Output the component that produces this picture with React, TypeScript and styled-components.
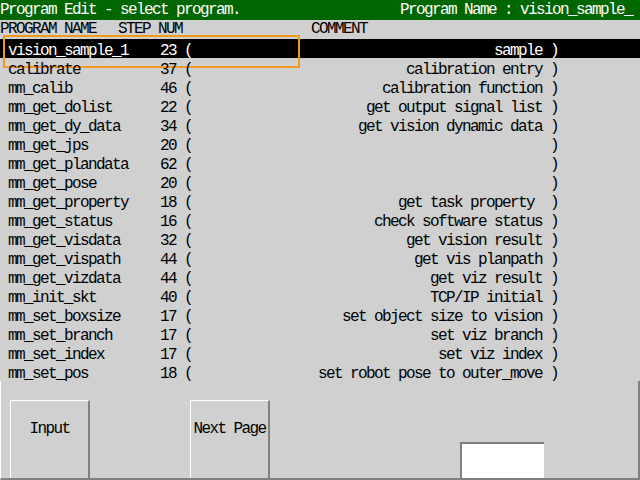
import React from "react";
import styled, { createGlobalStyle } from "styled-components";

const Global = createGlobalStyle`
  html, body { margin: 0; padding: 0; background: #d0d0d0; overflow: hidden; }
  * { box-sizing: border-box; }
`;

const FONT = `"Liberation Mono", "DejaVu Sans Mono", monospace`;

const Screen = styled.div`
  width: 640px;
  height: 480px;
  display: flex;
  flex-direction: column;
  background: #d0d0d0;
  font-family: ${FONT};
  font-size: 16px;
  letter-spacing: -1.6px;
  color: #000;
  white-space: pre;
  overflow: hidden;
`;

const TitleBar = styled.div`
  height: 20px;
  flex: 0 0 20px;
  background: #006600;
  color: #ffffff;
  display: flex;
  justify-content: space-between;
  padding: 1px 8px 0 0;
  line-height: 19px;
`;

const HeaderRow = styled.div`
  height: 19px;
  flex: 0 0 19px;
  display: grid;
  grid-template-columns: 118px 193px 1fr;
  line-height: 18px;
`;

const List = styled.div`
  display: flex;
  flex-direction: column;
`;

const Row = styled.div<{ $selected?: boolean }>`
  position: relative;
  height: 19px;
  padding: 4px 0 0 8px;
  line-height: 16px;
  display: grid;
  grid-template-columns: 136px 32px 16px 350px 16px;
  background: ${(p) => (p.$selected ? "#000" : "transparent")};
  color: ${(p) => (p.$selected ? "#fff" : "#000")};
  ${(p) =>
    p.$selected &&
    `
    &::after {
      content: "";
      position: absolute;
      left: 3px;
      top: -4px;
      width: 293px;
      height: 29px;
      border: 2px solid #f29a1c;
      pointer-events: none;
    }
  `}
`;

const Cell = styled.span<{ $right?: boolean }>`
  text-align: ${(p) => (p.$right ? "right" : "left")};
  overflow: visible;
`;

const Panel = styled.div`
  flex: 1;
  display: flex;
  align-items: stretch;
  padding: 19px 0 0 9px;
  border-left: 1px solid #ffffff;
  border-right: 2px solid #808080;
  border-bottom: 2px solid #808080;
`;

const Button = styled.div<{ $gap?: number }>`
  width: 80px;
  margin-left: ${(p) => p.$gap ?? 0}px;
  border-top: 1px solid #ffffff;
  border-left: 1px solid #ffffff;
  border-right: 2px solid #808080;
  padding-top: 19px;
  line-height: 19px;
  text-align: center;
  background: #d0d0d0;
`;

const InputBox = styled.div`
  align-self: flex-end;
  margin-left: 190px;
  width: 84px;
  height: 36px;
  background: #ffffff;
  border-top: 2px solid #808080;
  border-left: 2px solid #808080;
`;

const programs: [string, string, string][] = [
  ["vision_sample_1", "23", "sample"],
  ["calibrate", "37", "calibration entry"],
  ["mm_calib", "46", "calibration function"],
  ["mm_get_dolist", "22", "get output signal list"],
  ["mm_get_dy_data", "34", "get vision dynamic data"],
  ["mm_get_jps", "20", ""],
  ["mm_get_plandata", "62", ""],
  ["mm_get_pose", "20", ""],
  ["mm_get_property", "18", "get task property "],
  ["mm_get_status", "16", "check software status"],
  ["mm_get_visdata", "32", "get vision result"],
  ["mm_get_vispath", "44", "get vis planpath"],
  ["mm_get_vizdata", "44", "get viz result"],
  ["mm_init_skt", "40", "TCP/IP initial"],
  ["mm_set_boxsize", "17", "set object size to vision"],
  ["mm_set_branch", "17", "set viz branch"],
  ["mm_set_index", "17", "set viz index"],
  ["mm_set_pos", "18", "set robot pose to outer_move"],
];

export default function App() {
  return (
    <Screen>
      <Global />
      <TitleBar>
        <span>Program Edit - select program.</span>
        <span>Program Name : vision_sample_</span>
      </TitleBar>
      <HeaderRow>
        <span>PROGRAM NAME</span>
        <span>STEP NUM</span>
        <span>COMMENT</span>
      </HeaderRow>
      <List>
        {programs.map(([name, step, comment], i) => (
          <Row key={name} $selected={i === 0}>
            <Cell>{name}</Cell>
            <Cell $right>{step}</Cell>
            <Cell>{" ("}</Cell>
            <Cell $right>{comment}</Cell>
            <Cell>{" )"}</Cell>
          </Row>
        ))}
      </List>
      <Panel>
        <Button>Input</Button>
        <Button $gap={100}>Next Page</Button>
        <InputBox />
      </Panel>
    </Screen>
  );
}
